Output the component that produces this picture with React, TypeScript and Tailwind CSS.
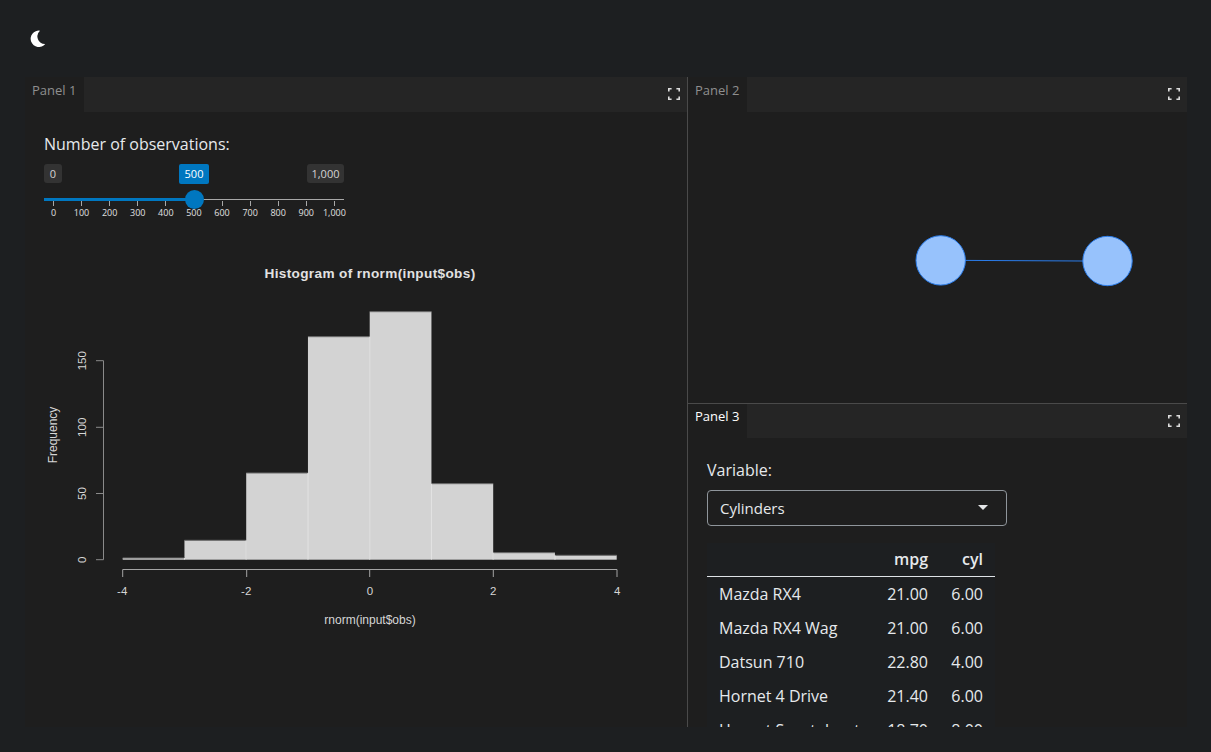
import React from "react";

const font = "font-['Open_Sans',sans-serif]";

function Expand() {
  return (
    <svg width="12" height="12" viewBox="0 0 12 12" className="shrink-0">
      <path d="M.8 3.6V.8H3.6M8.4 .8H11.2V3.6M11.2 8.4V11.2H8.4M3.6 11.2H.8V8.4" fill="none" stroke="#dcdcdc" strokeWidth="1.6" />
    </svg>
  );
}

function Header({ label, color, h, pt }: { label: string; color: string; h: string; pt: string }) {
  return (
    <div className={`flex shrink-0 items-center bg-[#252525] ${h}`}>
      <div className={`h-full w-[59px] bg-[#1e1e1e] pl-[7px] text-[13px] leading-[18px] ${pt} ${color}`}>{label}</div>
      <div className="ml-auto mr-[7.5px] -mt-[1px]"><Expand /></div>
    </div>
  );
}

const ticks = ["0", "100", "200", "300", "400", "500", "600", "700", "800", "900", "1,000"];

function Slider() {
  return (
    <div className="mt-[8px] w-[300px]">
      <div className="flex h-[20px] items-start text-[11px] leading-[19px]">
        <div className="h-[19px] w-[18px] rounded-[3px] bg-[#333333] text-center text-[#d4d4d4]">0</div>
        <div className="ml-[117px] h-[20px] w-[30px] rounded-[2px] bg-[#0077c0] text-center text-white">500</div>
        <div className="ml-[98px] h-[19px] w-[37px] rounded-[3px] bg-[#333333] text-center text-[#d4d4d4]">1,000</div>
      </div>
      <div className="relative mt-[15px] h-px bg-[#a8a8a8]">
        <div className="absolute left-0 top-[-1px] h-[3px] w-[150px] bg-[#0077c0]" />
        <div className="absolute left-[140.5px] top-[-9px] h-[19px] w-[19px] rounded-full bg-[#0077c0]" />
      </div>
      <div className="ml-[-4.6px] mt-[1px] flex w-[310px]">
        {ticks.map((t) => (
          <div key={t} className="flex w-[28.1px] shrink-0 flex-col items-center">
            <div className="h-[5px] w-px bg-[#a8a8a8]" />
            <div className="mt-[1px] whitespace-nowrap text-[9px] leading-[12px] text-[#e0e0e0]">{t}</div>
          </div>
        ))}
      </div>
    </div>
  );
}

const X0 = 122.7;
const W = 61.75;
const tops = [558, 540.3, 473, 336.7, 311.7, 483.7, 552.7, 555.3];
const BASE = 559.7;

function Histogram() {
  return (
    <svg width="620" height="400" viewBox="44 250 620 400" className="mt-[31px] block" fontFamily="'Liberation Sans', Arial, sans-serif" fontSize="12" fill="#d6d6d6">
      <text x="370" y="278" textAnchor="middle" fontWeight="700" fontSize="13.6" letterSpacing="0.35" fill="#e2e2e2">Histogram of rnorm(input$obs)</text>
      {tops.map((t, i) => (
        <rect key={i} x={X0 + i * W} y={t} width={W} height={BASE - t} fill="#d3d3d3" />
      ))}
      {tops.map((t, i) => (
        <line key={i} x1={X0 + i * W} x2={X0 + (i + 1) * W} y1={t} y2={t} stroke="#6c6c6c" strokeWidth="1" />
      ))}
      {tops.slice(1).map((t, i) => (
        <line key={i} x1={X0 + (i + 1) * W} x2={X0 + (i + 1) * W} y1={Math.max(t, tops[i])} y2={BASE} stroke="#e6e6e6" strokeWidth="1" />
      ))}
      <path d="M103.5 360.7V559.7M96 360.7H103.5M96 427.3H103.5M96 493.5H103.5M96 559.7H103.5" fill="none" stroke="#8a8a8a" strokeWidth="1" />
      <path d="M122.7 569.5H617M122.7 569.5V577M246.7 569.5V577M369.7 569.5V577M493.3 569.5V577M617 569.5V577" fill="none" stroke="#a4a4a4" strokeWidth="1" />
      {[["-4", 122.2], ["-2", 246.2], ["0", 370], ["2", 493.3], ["4", 617.3]].map(([l, x]) => (
        <text key={l as string} x={x as number} y="595" textAnchor="middle" fontSize="11.5">{l}</text>
      ))}
      {[["0", 559.7], ["50", 493.5], ["100", 427.3], ["150", 360.7]].map(([l, y]) => (
        <text key={l as string} transform={`translate(86 ${y}) rotate(-90)`} textAnchor="middle" fontSize="11.5">{l}</text>
      ))}
      <text transform="translate(57 435) rotate(-90)" textAnchor="middle">Frequency</text>
      <text x="370" y="624" textAnchor="middle">rnorm(input$obs)</text>
    </svg>
  );
}

function Graph() {
  return (
    <svg width="499" height="291" viewBox="688 112 499 291" className="block">
      <line x1="965" y1="260.4" x2="1083" y2="261" stroke="#2b7ce9" strokeWidth="1" />
      <circle cx="940.7" cy="260.4" r="24.7" fill="#97c2fc" stroke="#2b7ce9" strokeWidth="1" />
      <circle cx="1107.5" cy="261" r="24.7" fill="#97c2fc" stroke="#2b7ce9" strokeWidth="1" />
    </svg>
  );
}

const rows = [
  ["Mazda RX4", "21.00", "6.00"],
  ["Mazda RX4 Wag", "21.00", "6.00"],
  ["Datsun 710", "22.80", "4.00"],
  ["Hornet 4 Drive", "21.40", "6.00"],
  ["Hornet Sportabout", "18.70", "8.00"],
];

function DataTable() {
  return (
    <div className="mt-[17px] w-[288px] bg-[#1d1f21] text-[16px] leading-[24px] text-[#e6e9ec]">
      <div className="grid h-[34px] grid-cols-[165px_68px_55px] border-b border-[#dee2e6] pt-[4px] font-semibold">
        <div />
        <div className="pr-[12px] text-right">mpg</div>
        <div className="pr-[12px] text-right">cyl</div>
      </div>
      {rows.map((r) => (
        <div key={r[0]} className="grid h-[34px] grid-cols-[165px_68px_55px] items-center">
          <div className="whitespace-nowrap pl-[12px]">{r[0]}</div>
          <div className="pr-[12px] text-right">{r[1]}</div>
          <div className="pr-[12px] text-right">{r[2]}</div>
        </div>
      ))}
    </div>
  );
}

export default function App() {
  return (
    <div className={`h-[752px] w-[1211px] overflow-hidden bg-[#1d1f21] ${font}`}>
      <div className="flex h-[77px] items-start pl-[30px] pt-[30px]">
        <svg width="16" height="17" viewBox="30 30 16 17">
          <path d="M40 30.7A8.2 8.2 0 1 0 45.2 44A7.6 7.6 0 0 1 40 30.7Z" fill="#ffffff" />
        </svg>
      </div>
      <div className="mx-[25px] flex h-[650px] w-[1162px] bg-[#1e1e1e]">
        <section className="flex w-[662px] shrink-0 flex-col">
          <Header label="Panel 1" color="text-[#8f8f8f]" h="h-[35px]" pt="pt-[4px]" />
          <div className="flex flex-col pl-[19px] pt-[20px]">
            <div className="text-[16px] leading-[24px] text-[#e6e9ec]">Number of observations:</div>
            <Slider />
            <Histogram />
          </div>
        </section>
        <div className="w-px shrink-0 bg-[#4a4a4a]" />
        <div className="flex w-[499px] shrink-0 flex-col">
          <section className="flex h-[326px] shrink-0 flex-col">
            <Header label="Panel 2" color="text-[#8f8f8f]" h="h-[35px]" pt="pt-[4px]" />
            <Graph />
          </section>
          <div className="h-px shrink-0 bg-[#4a4a4a]" />
          <section className="flex min-h-0 flex-1 flex-col overflow-hidden">
            <Header label="Panel 3" color="text-white" h="h-[34px]" pt="pt-[3px]" />
            <div className="pl-[19px] pt-[20px]">
              <div className="text-[16px] leading-[24px] text-[#e6e9ec]">Variable:</div>
              <div className="mt-[8px] flex h-[36px] w-[300px] items-center justify-between rounded-[4px] border border-[#8f959b] pl-[12px] pr-[17px] text-[15px] text-[#e6e9ec]">
                <span>Cylinders</span>
                <svg width="12" height="6" viewBox="0 0 12 6" className="-mt-[1px]"><path d="M1 0H11L6 5Z" fill="#e4e6e8" /></svg>
              </div>
              <DataTable />
            </div>
          </section>
        </div>
      </div>
    </div>
  );
}
